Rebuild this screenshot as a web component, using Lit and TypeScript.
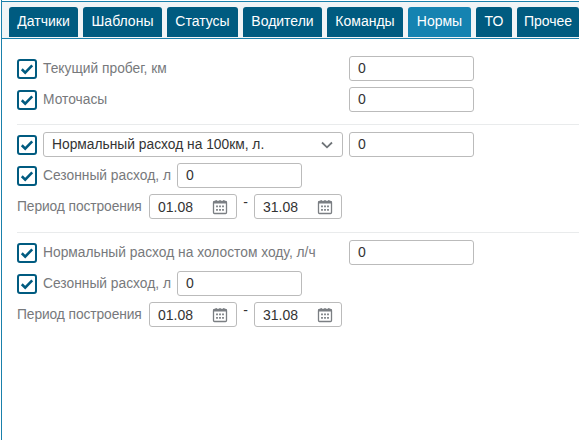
import { LitElement, html, css, svg } from "lit";
import { customElement } from "lit/decorators.js";

const TABS: [string, number][] = [
  ["Датчики", 69],
  ["Шаблоны", 79],
  ["Статусы", 71],
  ["Водители", 79],
  ["Команды", 76],
  ["Нормы", 63],
  ["ТО", 36],
  ["Прочее", 62],
];

@customElement("app-root")
export class AppRoot extends LitElement {
  static styles = css`
    :host {
      display: block;
      height: 440px;
      width: 579px;
      overflow: hidden;
      box-sizing: border-box;
      font-family: "Liberation Sans", Arial, sans-serif;
      font-size: 14px;
      color: #333;
      background: #fff;
    }
    .frame {
      height: 440px;
      box-sizing: border-box;
      margin-left: 1px;
      border-left: 1px solid #1a80ab;
      padding-top: 1px;
    }
    .tabs {
      display: flex;
      gap: 5px;
      height: 38px;
      box-sizing: border-box;
      padding: 5px 0 0 7px;
      border-top: 1px solid #1a80ab;
      border-bottom: 1px solid #1a80ab;
      background: #f1f4f6;
      overflow: hidden;
    }
    .tab {
      flex: none;
      height: 30px;
      box-sizing: border-box;
      text-align: center;
      line-height: 28px;
      color: #fff;
      background: #005b80;
      border-radius: 3px 3px 0 0;
    }
    .tab.active { background: #1583b1; }
    .content { padding: 17px 0 0 15px; }
    .row { display: flex; align-items: center; width: 457px; height: 25px; margin-bottom: 6px; }
    .check {
      flex: none;
      width: 20px;
      height: 20px;
      box-sizing: border-box;
      border: 2px solid #005b80;
      border-radius: 3px;
      margin-right: 6px;
      display: flex;
      align-items: center;
      justify-content: center;
    }
    .label { color: #77797c; white-space: nowrap; font-size: 13.8px; }
    .label.seasonal { width: 134px; flex: none; }
    .label.period { width: 132px; flex: none; letter-spacing: -0.1px; margin-top: -1px; }
    .input {
      box-sizing: border-box;
      height: 25px;
      width: 125px;
      border: 1px solid #bbb;
      border-radius: 3px;
      padding: 0 8px;
      line-height: 23px;
      color: #333;
      background: #fff;
      flex: none;
    }
    .end { margin-left: auto; }
    .select {
      box-sizing: border-box;
      width: 300px;
      height: 25px;
      border: 1px solid #bbb;
      border-radius: 3px;
      padding: 0 9px 0 8px;
      display: flex;
      align-items: center;
      justify-content: space-between;
      flex: none;
      font-size: 13.8px;
    }
    hr {
      border: 0;
      border-top: 1px solid #e9ebec;
      margin: 0 0 7px;
    }
    .date {
      box-sizing: border-box;
      flex: none;
      width: 88px;
      height: 25px;
      border: 1px solid #bbb;
      border-radius: 3px;
      padding: 0 8px;
      display: flex;
      align-items: center;
      justify-content: space-between;
    }
    .dash { width: 17px; text-align: center; flex: none; margin-top: -10px; }
    .section { padding-bottom: 6px; }
    .section.tall { padding-bottom: 7px; }
  `;

  private cal() {
    return html`<svg width="16" height="16" viewBox="0 0 16 16">
      ${svg`<rect x="1.500" y="2.500" width="13" height="12" rx="1" fill="none" stroke="#7b7f83" stroke-width="1.300" />
      <path fill="#7b7f83" d="M1 2.500h14v2H1zM3.500 1h1.300v2H3.500zM7.350 1h1.300v2H7.350zM11.200 1h1.300v2h-1.300zM4.100 6.500h1.800v1.800H4.100zM7.100 6.500h1.800v1.800H7.100zM10.100 6.500h1.800v1.800h-1.800zM4.100 10h1.800v1.800H4.100zM7.100 10h1.800v1.800H7.100zM10.100 10h1.800v1.800h-1.800z" />`}
    </svg>`;
  }

  private check() {
    return html`<span class="check"><svg width="14" height="12" viewBox="0 0 14 12">
      <path d="M1.800 6.300 5.200 9.600 12.200 2.400" fill="none" stroke="#005b80" stroke-width="2.600" />
    </svg></span>`;
  }

  private dates() {
    return html`<div class="row">
      <span class="label period">Период построения</span>
      <span class="date">01.08${this.cal()}</span>
      <span class="dash">-</span>
      <span class="date">31.08${this.cal()}</span>
    </div>`;
  }

  private seasonal() {
    return html`<div class="row">
      ${this.check()}<span class="label seasonal">Сезонный расход, л</span>
      <span class="input">0</span>
    </div>`;
  }

  render() {
    return html`<div class="frame">
      <div class="tabs">
        ${TABS.map(
          ([t, w]) => html`<div class="tab ${t === "Нормы" ? "active" : ""}" style="width:${w}px">${t}</div>`
        )}
      </div>
      <div class="content">
        <div class="section">
          <div class="row">${this.check()}<span class="label">Текущий пробег, км</span><span class="input end">0</span></div>
          <div class="row">${this.check()}<span class="label">Моточасы</span><span class="input end">0</span></div>
        </div>
        <hr />
        <div class="section tall">
          <div class="row">
            ${this.check()}
            <span class="select">Нормальный расход на 100км, л.
              <svg width="12" height="8" viewBox="0 0 12 8"><path d="M1 1.500 6 6.300 11 1.500" fill="none" stroke="#6f7478" stroke-width="1.800" /></svg>
            </span>
            <span class="input end">0</span>
          </div>
          ${this.seasonal()}
          ${this.dates()}
        </div>
        <hr />
        <div class="row">${this.check()}<span class="label">Нормальный расход на холостом ходу, л/ч</span><span class="input end">0</span></div>
        ${this.seasonal()}
        ${this.dates()}
      </div>
    </div>`;
  }
}
